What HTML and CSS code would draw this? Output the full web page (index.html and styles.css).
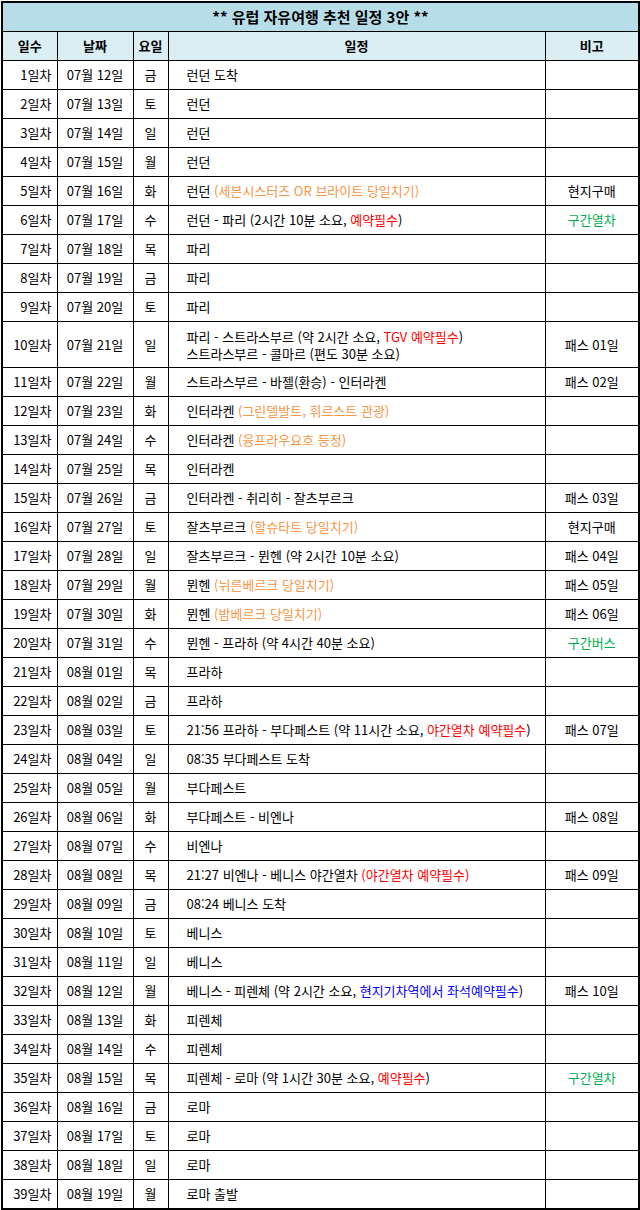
FILE: index.html
```html
<!DOCTYPE html>
<html lang="ko">
<head>
<meta charset="utf-8">
<title>유럽 자유여행 추천 일정 3안</title>
<link rel="stylesheet" href="styles.css">
</head>
<body>
<table class="plan">
<colgroup>
<col class="c-day"><col class="c-date"><col class="c-wd"><col class="c-plan"><col class="c-note">
</colgroup>
<thead>
<tr class="title"><th colspan="5">** 유럽 자유여행 추천 일정 3안 **</th></tr>
<tr class="head"><th>일수</th><th>날짜</th><th>요일</th><th>일정</th><th>비고</th></tr>
</thead>
<tbody>
<tr><td class="d">1일차</td><td>07월 12일</td><td>금</td><td class="p">런던 도착</td><td></td></tr>
<tr><td class="d">2일차</td><td>07월 13일</td><td>토</td><td class="p">런던</td><td></td></tr>
<tr><td class="d">3일차</td><td>07월 14일</td><td>일</td><td class="p">런던</td><td></td></tr>
<tr><td class="d">4일차</td><td>07월 15일</td><td>월</td><td class="p">런던</td><td></td></tr>
<tr><td class="d">5일차</td><td>07월 16일</td><td>화</td><td class="p">런던 <span class="or">(세븐시스터즈 OR 브라이트 당일치기)</span></td><td>현지구매</td></tr>
<tr><td class="d">6일차</td><td>07월 17일</td><td>수</td><td class="p">런던 - 파리 (2시간 10분 소요, <span class="rd">예약필수</span>)</td><td class="gr">구간열차</td></tr>
<tr><td class="d">7일차</td><td>07월 18일</td><td>목</td><td class="p">파리</td><td></td></tr>
<tr><td class="d">8일차</td><td>07월 19일</td><td>금</td><td class="p">파리</td><td></td></tr>
<tr><td class="d">9일차</td><td>07월 20일</td><td>토</td><td class="p">파리</td><td></td></tr>
<tr class="tall"><td class="d">10일차</td><td>07월 21일</td><td>일</td><td class="p"><span class="ln">파리 - 스트라스부르 (약 2시간 소요, <span class="rd">TGV 예약필수</span>)</span><span class="ln">스트라스부르 - 콜마르 (편도 30분 소요)</span></td><td>패스 01일</td></tr>
<tr><td class="d">11일차</td><td>07월 22일</td><td>월</td><td class="p">스트라스부르 - 바젤(환승) - 인터라켄</td><td>패스 02일</td></tr>
<tr><td class="d">12일차</td><td>07월 23일</td><td>화</td><td class="p">인터라켄 <span class="or">(그린델발트, 휘르스트 관광)</span></td><td></td></tr>
<tr><td class="d">13일차</td><td>07월 24일</td><td>수</td><td class="p">인터라켄 <span class="or">(융프라우요흐 등정)</span></td><td></td></tr>
<tr><td class="d">14일차</td><td>07월 25일</td><td>목</td><td class="p">인터라켄</td><td></td></tr>
<tr><td class="d">15일차</td><td>07월 26일</td><td>금</td><td class="p">인터라켄 - 취리히 - 잘츠부르크</td><td>패스 03일</td></tr>
<tr><td class="d">16일차</td><td>07월 27일</td><td>토</td><td class="p">잘츠부르크 <span class="or">(할슈타트 당일치기)</span></td><td>현지구매</td></tr>
<tr><td class="d">17일차</td><td>07월 28일</td><td>일</td><td class="p">잘츠부르크 - 뮌헨 (약 2시간 10분 소요)</td><td>패스 04일</td></tr>
<tr><td class="d">18일차</td><td>07월 29일</td><td>월</td><td class="p">뮌헨 <span class="or">(뉘른베르크 당일치기)</span></td><td>패스 05일</td></tr>
<tr><td class="d">19일차</td><td>07월 30일</td><td>화</td><td class="p">뮌헨 <span class="or">(밤베르크 당일치기)</span></td><td>패스 06일</td></tr>
<tr><td class="d">20일차</td><td>07월 31일</td><td>수</td><td class="p">뮌헨 - 프라하 (약 4시간 40분 소요)</td><td class="gr">구간버스</td></tr>
<tr><td class="d">21일차</td><td>08월 01일</td><td>목</td><td class="p">프라하</td><td></td></tr>
<tr><td class="d">22일차</td><td>08월 02일</td><td>금</td><td class="p">프라하</td><td></td></tr>
<tr><td class="d">23일차</td><td>08월 03일</td><td>토</td><td class="p">21:56 프라하 - 부다페스트 (약 11시간 소요, <span class="rd">야간열차 예약필수</span>)</td><td>패스 07일</td></tr>
<tr><td class="d">24일차</td><td>08월 04일</td><td>일</td><td class="p">08:35 부다페스트 도착</td><td></td></tr>
<tr><td class="d">25일차</td><td>08월 05일</td><td>월</td><td class="p">부다페스트</td><td></td></tr>
<tr><td class="d">26일차</td><td>08월 06일</td><td>화</td><td class="p">부다페스트 - 비엔나</td><td>패스 08일</td></tr>
<tr><td class="d">27일차</td><td>08월 07일</td><td>수</td><td class="p">비엔나</td><td></td></tr>
<tr><td class="d">28일차</td><td>08월 08일</td><td>목</td><td class="p">21:27 비엔나 - 베니스 야간열차 <span class="rd">(야간열차 예약필수)</span></td><td>패스 09일</td></tr>
<tr><td class="d">29일차</td><td>08월 09일</td><td>금</td><td class="p">08:24 베니스 도착</td><td></td></tr>
<tr><td class="d">30일차</td><td>08월 10일</td><td>토</td><td class="p">베니스</td><td></td></tr>
<tr><td class="d">31일차</td><td>08월 11일</td><td>일</td><td class="p">베니스</td><td></td></tr>
<tr><td class="d">32일차</td><td>08월 12일</td><td>월</td><td class="p">베니스 - 피렌체 (약 2시간 소요, <span class="bl">현지기차역에서 좌석예약필수</span>)</td><td>패스 10일</td></tr>
<tr><td class="d">33일차</td><td>08월 13일</td><td>화</td><td class="p">피렌체</td><td></td></tr>
<tr><td class="d">34일차</td><td>08월 14일</td><td>수</td><td class="p">피렌체</td><td></td></tr>
<tr><td class="d">35일차</td><td>08월 15일</td><td>목</td><td class="p">피렌체 - 로마 (약 1시간 30분 소요, <span class="rd">예약필수</span>)</td><td class="gr">구간열차</td></tr>
<tr><td class="d">36일차</td><td>08월 16일</td><td>금</td><td class="p">로마</td><td></td></tr>
<tr><td class="d">37일차</td><td>08월 17일</td><td>토</td><td class="p">로마</td><td></td></tr>
<tr><td class="d">38일차</td><td>08월 18일</td><td>일</td><td class="p">로마</td><td></td></tr>
<tr><td class="d">39일차</td><td>08월 19일</td><td>월</td><td class="p">로마 출발</td><td></td></tr>
</tbody>
</table>
</body>
</html>
```

FILE: styles.css
```css
html, body {
  margin: 0;
  padding: 0;
  background: #ffffff;
}
body {
  padding: 1px 0 0 1px;
  font-family: "Noto Sans CJK KR", "Noto Sans", sans-serif;
  font-size: 13px;
  color: #000000;
}
.plan {
  border-collapse: collapse;
  table-layout: fixed;
  width: 637px;
  border: 2px solid #000;
}
.c-day { width: 55px; }
.c-date { width: 76px; }
.c-wd { width: 35px; }
.c-plan { width: 377px; }
.c-note { width: 94px; }
.plan th, .plan td {
  border: 1px solid #000;
  padding: 0;
  height: 28px;
  line-height: 16px;
  text-align: center;
  white-space: nowrap;
  overflow: hidden;
}
.title th {
  background: #b7dee8;
  font-size: 15px;
  font-weight: bold;
  height: 28px;
}
.head th {
  background: #daeef3;
  font-weight: bold;
}
.plan td.d {
  text-align: right;
  padding-right: 5px;
}
.plan td.p {
  text-align: left;
  padding-left: 18px;
}
.tall td {
  height: 45px;
}
.ln {
  display: block;
  height: 17px;
  line-height: 17px;
  overflow: hidden;
}
.or { color: #f79646; }
.rd { color: #ff0000; }
.gr { color: #00b050; }
.bl { color: #0000ff; }
```
